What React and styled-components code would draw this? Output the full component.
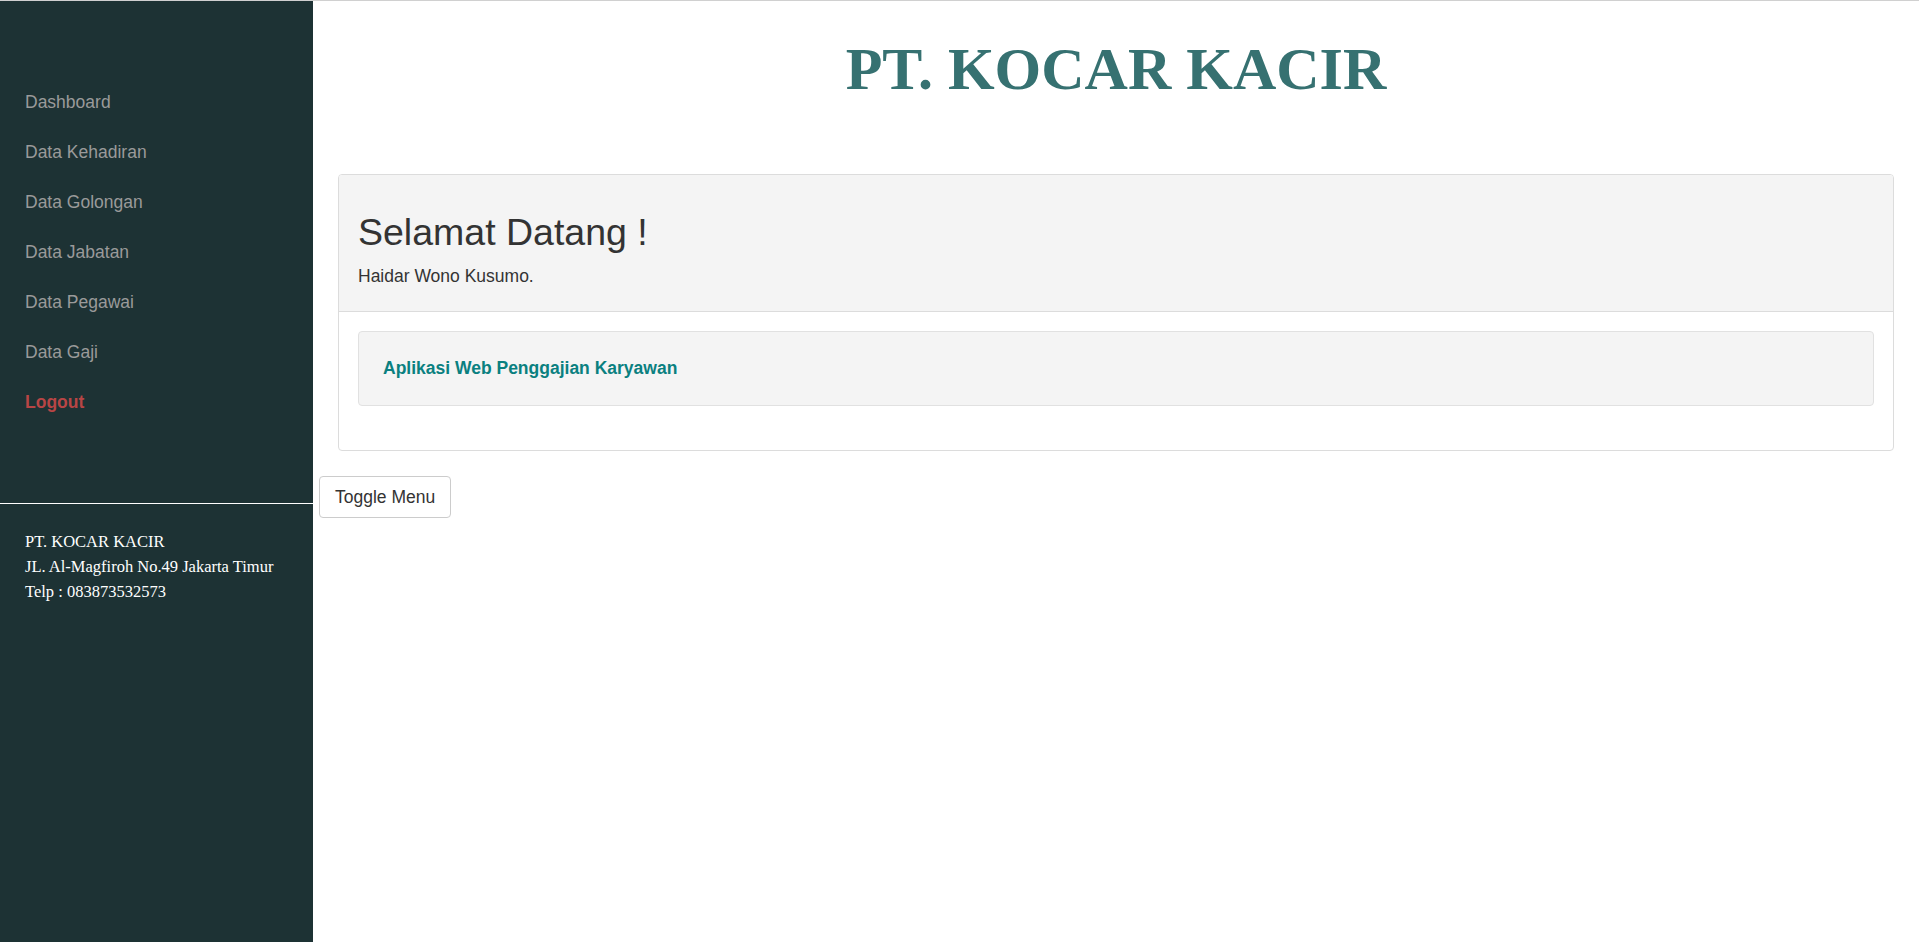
import React from "react";
import styled, { createGlobalStyle } from "styled-components";

const Global = createGlobalStyle`
  html, body { margin: 0; padding: 0; }
  body {
    border-top: 1px solid #d0d0d0;
    background: #fff;
    font-family: "Liberation Sans", Arial, sans-serif;
    color: #333;
  }
  * { box-sizing: border-box; }
`;

const Layout = styled.div`
  display: flex;
  min-height: 941px;
`;

const Sidebar = styled.aside`
  width: 313px;
  flex: 0 0 313px;
  background: #1d3234;
  padding-top: 76px;
  display: flex;
  flex-direction: column;
`;

const NavList = styled.ul`
  list-style: none;
  margin: 0;
  padding: 0;
`;

const NavItem = styled.li`
  line-height: 50px;
  font-size: 17.5px;
  padding-left: 25px;
`;

const NavLink = styled.a`
  color: ${(p) => (p.$danger ? "#b84545" : "#9a9a9a")};
  font-weight: ${(p) => (p.$danger ? "bold" : "normal")};
  text-decoration: none;
  cursor: pointer;
`;

const Divider = styled.hr`
  margin: 76px 0 0;
  border: 0;
  border-top: 1px solid #ffffff;
  height: 0;
`;

const Footer = styled.div`
  padding: 25px 0 0 25px;
  font-family: "Liberation Serif", "Times New Roman", serif;
  font-size: 16.5px;
  line-height: 25px;
  color: #ffffff;
`;

const Main = styled.main`
  flex: 1;
  display: flex;
  flex-direction: column;
  align-items: flex-start;
`;

const Header = styled.header`
  align-self: stretch;
  text-align: center;
`;

const Title = styled.h1`
  margin: 35px 0 0;
  font-family: "Liberation Serif", "Times New Roman", serif;
  font-weight: bold;
  font-size: 60px;
  line-height: 66px;
  color: #367171;
`;

const Panel = styled.section`
  align-self: stretch;
  margin: 72px 25px 0 25px;
  border: 1px solid #dcdcdc;
  border-radius: 4px;
  overflow: hidden;
`;

const PanelHeading = styled.div`
  background: #f4f4f4;
  border-bottom: 1px solid #dcdcdc;
  padding: 37px 19px 22px;
`;

const Greeting = styled.h2`
  margin: 0 0 11px;
  font-size: 37.5px;
  line-height: 41px;
  font-weight: normal;
  color: #333;
`;

const UserName = styled.p`
  margin: 0;
  font-size: 17.5px;
  line-height: 25px;
  color: #333;
`;

const PanelBody = styled.div`
  padding: 19px 19px 44px;
`;

const Well = styled.div`
  background: #f4f4f4;
  border: 1px solid #e1e1e1;
  border-radius: 4px;
  padding: 24px 24px;
`;

const WellText = styled.h5`
  margin: 0;
  font-size: 17.5px;
  line-height: 25px;
  font-weight: bold;
  color: #0a8080;
`;

const ToggleButton = styled.button`
  margin: 25px 0 0 6px;
  padding: 8px 15px;
  font-family: "Liberation Sans", Arial, sans-serif;
  font-size: 17.5px;
  line-height: 24px;
  color: #333;
  background: #fff;
  border: 1px solid #cccccc;
  border-radius: 4px;
  cursor: pointer;
`;

const menu = [
  "Dashboard",
  "Data Kehadiran",
  "Data Golongan",
  "Data Jabatan",
  "Data Pegawai",
  "Data Gaji",
];

export default function App() {
  return (
    <>
      <Global />
      <Layout>
        <Sidebar>
          <NavList>
            {menu.map((m) => (
              <NavItem key={m}>
                <NavLink>{m}</NavLink>
              </NavItem>
            ))}
            <NavItem>
              <NavLink $danger>Logout</NavLink>
            </NavItem>
          </NavList>
          <Divider />
          <Footer>
            <div>PT. KOCAR KACIR</div>
            <div>JL. Al-Magfiroh No.49 Jakarta Timur</div>
            <div>Telp : 083873532573</div>
          </Footer>
        </Sidebar>
        <Main>
          <Header>
            <Title>PT. KOCAR KACIR</Title>
          </Header>
          <Panel>
            <PanelHeading>
              <Greeting>Selamat Datang !</Greeting>
              <UserName>Haidar Wono Kusumo.</UserName>
            </PanelHeading>
            <PanelBody>
              <Well>
                <WellText>Aplikasi Web Penggajian Karyawan</WellText>
              </Well>
            </PanelBody>
          </Panel>
          <ToggleButton>Toggle Menu</ToggleButton>
        </Main>
      </Layout>
    </>
  );
}
